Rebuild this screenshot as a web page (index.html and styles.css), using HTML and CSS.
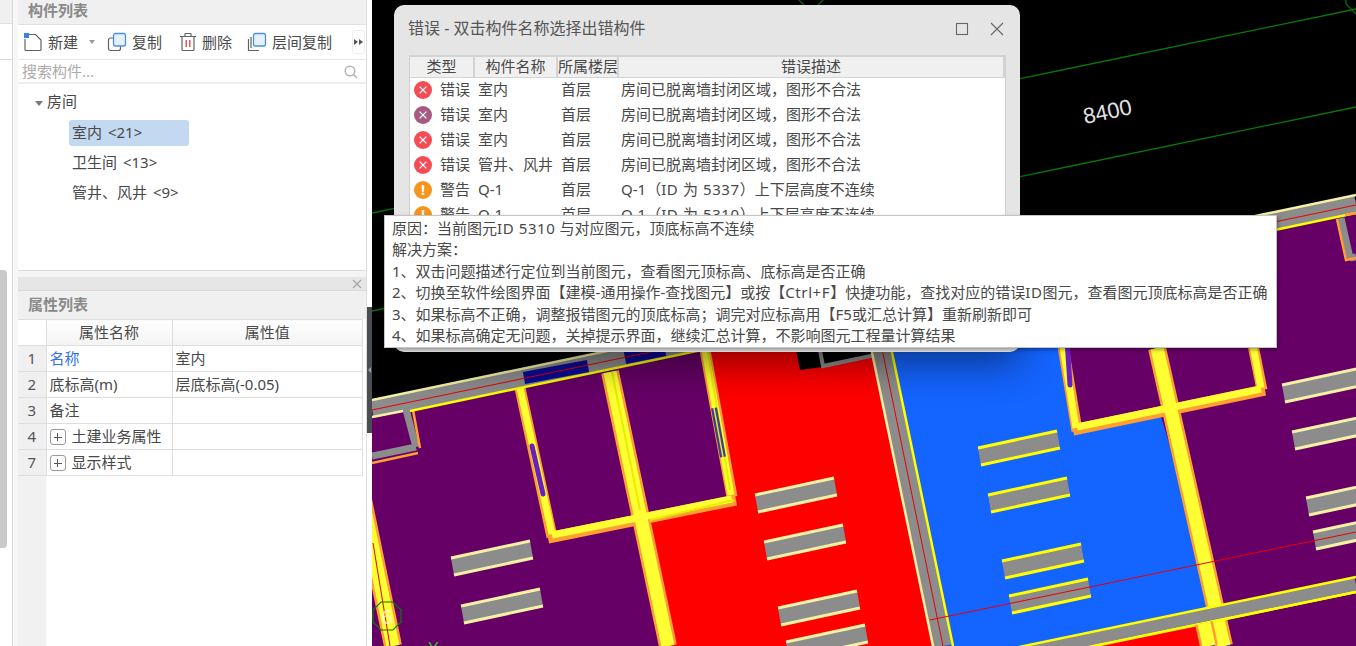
FILE: index.html
```html
<!DOCTYPE html>
<html lang="zh-CN">
<head>
<meta charset="utf-8">
<title>构件列表</title>
<link rel="stylesheet" href="styles.css">
</head>
<body>
<svg class="sprites" width="0" height="0" aria-hidden="true">
  <defs>
    <symbol id="i-err" viewBox="0 0 18 18"><path class="x-mark" d="M5.6 5.6 12.4 12.4M12.4 5.6 5.6 12.4"/></symbol>
    <g id="fx">
      <polygon class="fx-body" points="0,0 79,-17 82,0 3,17"/>
      <path class="fx-edge" d="M0 0 79 -17M3 17 82 0"/>
    </g>
  </defs>
</svg>

<aside class="rail">
  <div class="rail-top"></div>
  <div class="rail-mid"></div>
  <div class="rail-low"><div class="rail-thumb"></div></div>
</aside>

<section class="side">
  <div class="panel list-panel">
    <div class="panel-title">构件列表</div>
    <div class="toolbar">
      <span class="tool tool-new">
        <svg class="ic" width="20" height="20" viewBox="0 0 20 20"><path class="ic-line" d="M4 2.500H12.500L18 8V17.500Q18 18.500 17 18.500H3Q2 18.500 2 17.500V7"/><rect class="ic-blue" x="1" y="1" width="5" height="5"/></svg>
        <span>新建</span><i class="caret"></i>
      </span>
      <span class="tool tool-copy">
        <svg class="ic" width="20" height="20" viewBox="0 0 20 20"><rect class="ic-line" x="1.500" y="6" width="12" height="12.500" rx="2"/><rect class="ic-front" x="6.500" y="1.500" width="12" height="12.500" rx="2"/></svg>
        <span>复制</span>
      </span>
      <span class="tool tool-del">
        <svg class="ic" width="18" height="20" viewBox="0 0 18 20"><path class="ic-line" d="M1 4.500H17M6 4.500V2Q6 1.500 6.500 1.500H11.500Q12 1.500 12 2V4.500M3 4.500V17.500Q3 18.500 4 18.500H14Q15 18.500 15 17.500V4.500"/><path class="ic-red" d="M7.200 8V15M10.800 8V15"/></svg>
        <span>删除</span>
      </span>
      <span class="tool tool-floor">
        <svg class="ic" width="20" height="20" viewBox="0 0 20 20"><path class="ic-line" d="M1.500 7V18.500H12M4 5V16"/><rect class="ic-front" x="6.500" y="1.500" width="12" height="12.500" rx="2"/></svg>
        <span>层间复制</span>
      </span>
      <span class="more"><i class="tri"></i><i class="tri"></i></span>
    </div>
    <div class="search">
      <span>搜索构件...</span>
      <svg width="14" height="14" viewBox="0 0 14 14"><circle class="mag" cx="6" cy="6" r="4.800"/><path class="mag" d="M9.500 9.500 13 13"/></svg>
    </div>
    <div class="tree">
      <div class="tree-root"><i class="tree-caret"></i>房间</div>
      <div class="tree-item selected">室内 &lt;21&gt;</div>
      <div class="tree-item">卫生间 &lt;13&gt;</div>
      <div class="tree-item">管井、风井 &lt;9&gt;</div>
    </div>
  </div>

  <div class="panel prop-panel">
    <div class="prop-close"><svg width="10" height="10" viewBox="0 0 10 10"><path class="close-x" d="M1 1 9 9M9 1 1 9"/></svg></div>
    <div class="panel-title prop-title">属性列表</div>
    <div class="prop-body">
      <table class="prop">
        <colgroup><col class="c-n"><col class="c-k"><col class="c-v"></colgroup>
        <thead><tr><th></th><th>属性名称</th><th>属性值</th></tr></thead>
        <tbody>
          <tr><th>1</th><td class="link">名称</td><td>室内</td></tr>
          <tr><th>2</th><td>底标高(m)</td><td>层底标高(-0.05)</td></tr>
          <tr><th>3</th><td>备注</td><td></td></tr>
          <tr><th>4</th><td><span class="expand"></span>土建业务属性</td><td></td></tr>
          <tr><th>7</th><td><span class="expand"></span>显示样式</td><td></td></tr>
        </tbody>
      </table>
    </div>
  </div>
</section>

<div class="splitter"><div class="split-handle"><i></i></div></div>

<main class="canvas">
  <svg class="drawing" width="984" height="646" viewBox="372 0 984 646">
    <rect class="bg" x="372" y="0" width="984" height="646"/>
    <path class="green" d="M372 213 1356 9M372 311 1356 107"/>
    <polygon class="purple" points="372,405 1356,200 1356,646 372,646"/>
    <polygon class="red" points="703,345 880,309 945,646 668,646 645,523 736,500"/>
    <polygon class="blue" points="878,300 1060,270 1077,430 1160,413 1230,646 940,646"/>
    <polygon class="bg" points="795,345 885,345 885,354 830,366 800,370"/>
    <path class="grey-thin" d="M819 345 823 366 885 353"/>

    <path class="orange thin" d="M520 388 552 537M548 538 736 500M705 350 732 497M1062 340 1077 431M1073 430 1265 390M1252 340 1262 390"/>
    <path class="orange thick" d="M610 372 668 646M1157 348 1224 646M361 490 393 646"/>
    <path class="yellow thin-in" d="M520 388 552 534M552 535 732 499M705 350 731 495M1062 340 1076 428M1077 427 1261 389M1252 340 1261 388"/>
    <path class="yellow thick-in" d="M610 372 668 646M1157 348 1224 646M361 490 393 646"/>
    <path class="lime" d="M612 372 640 510M708 352 730 490M650 520 734 500"/>

    <path class="wall" d="M868 285 943 646"/>
    <path class="cream-l" d="M858 285 933 646"/>
    <path class="yellow-l" d="M878 285 953 646"/>

    <path class="grey-w" d="M404 402 416 447"/>
    <path class="grey-w" d="M372 456 416 447"/>
    <path class="orange-l" d="M413 410 420 448M372 463 418 453"/>

    <path class="wall" d="M372 409 1356 204"/>
    <path class="cream-l" d="M372 400 1356 195M372 417 403 411"/>
    <path class="yellow-l" d="M410 411 1356 213"/>

    <path class="window" d="M524 378 588 366M625 358 665 350"/>

    <path class="slot" d="M532 446 543 494M1067 340 1070 385"/>
    <path class="slot-dark" d="M714 408 723 457"/>
    <path class="slot-line" d="M714 408 723 457"/>

    <path class="grey-w" d="M1341 218 1350 258M1350 258 1356 257"/>
    <path class="orange-l" d="M1337 219 1346 260 1356 258M1345 215 1356 213"/>

    <g class="fx-cream">
      <use href="#fx" transform="translate(451 558)"/>
      <use href="#fx" transform="translate(461 606)"/>
      <use href="#fx" transform="translate(755 495)"/>
      <use href="#fx" transform="translate(764 542)"/>
      <use href="#fx" transform="translate(778 608)"/>
      <use href="#fx" transform="translate(786 642)"/>
      <use href="#fx" transform="translate(1282 385)"/>
      <use href="#fx" transform="translate(1292 432)"/>
      <use href="#fx" transform="translate(1306 498)"/>
      <use href="#fx" transform="translate(1313 532)"/>
    </g>
    <g class="fx-yellow">
      <use href="#fx" transform="translate(978 448)"/>
      <use href="#fx" transform="translate(988 495)"/>
      <use href="#fx" transform="translate(1002 561)"/>
      <use href="#fx" transform="translate(1009 596)"/>
    </g>

    <path class="wall-b" d="M1356 584.500 1000 658"/>
    <path class="yellow-l" d="M1356 577 1000 651M1356 592 1060 653"/>
    <polygon class="red" points="1095,646 1204,623.500 1211,646"/>
    <path class="yellow-l" d="M1356 592 1090 647"/>
    <path class="orange thick" d="M1204 623 1209 646"/>
    <path class="yellow thick-in" d="M1204 623 1209 646"/>

    <path class="redline" d="M372 410 1356 205M930 620 1356 532M373 543 390 646M873 305 943 646"/>

    <polygon class="octagon" points="381,602 393,602 401,610 401,622 393,630 381,630 373,622 373,610"/>
    <polygon class="octagon" points="805,-22 817,-22 825,-14 825,-2 817,6 805,6 797,-2 797,-14"/>
    <polygon class="octagon" points="1356,-20 1370,-20 1380,-10 1380,4 1370,14 1356,14 1346,4 1346,-10"/>
    <text class="axis-no" x="387" y="624">6</text>
    <text class="axis-y" x="428" y="654">Y</text>
    <text class="dim" x="1085" y="124" transform="rotate(-12 1085 124)">8400</text>
  </svg>

  <div class="dialog">
    <div class="dlg-head">
      <span class="dlg-title">错误 - 双击构件名称选择出错构件</span>
      <span class="dlg-btns">
        <svg width="14" height="14" viewBox="0 0 14 14"><rect class="win-ic" x="1.500" y="1.500" width="11" height="11"/></svg>
        <svg width="14" height="14" viewBox="0 0 14 14"><path class="win-ic" d="M1 1 13 13M13 1 1 13"/></svg>
      </span>
    </div>
    <div class="dlg-body">
      <table class="err">
        <colgroup><col class="e-t"><col class="e-n"><col class="e-f"><col></colgroup>
        <thead><tr><th>类型</th><th>构件名称</th><th>所属楼层</th><th>错误描述</th></tr></thead>
        <tbody>
          <tr><td><span class="type"><span class="dot dot-err"><svg width="18" height="18"><use href="#i-err"/></svg></span>错误</span></td><td>室内</td><td>首层</td><td class="desc">房间已脱离墙封闭区域，图形不合法</td></tr>
          <tr><td><span class="type"><span class="dot dot-err2"><svg width="18" height="18"><use href="#i-err"/></svg></span>错误</span></td><td>室内</td><td>首层</td><td class="desc">房间已脱离墙封闭区域，图形不合法</td></tr>
          <tr><td><span class="type"><span class="dot dot-err"><svg width="18" height="18"><use href="#i-err"/></svg></span>错误</span></td><td>室内</td><td>首层</td><td class="desc">房间已脱离墙封闭区域，图形不合法</td></tr>
          <tr><td><span class="type"><span class="dot dot-err"><svg width="18" height="18"><use href="#i-err"/></svg></span>错误</span></td><td>管井、风井</td><td>首层</td><td class="desc">房间已脱离墙封闭区域，图形不合法</td></tr>
          <tr><td><span class="type"><span class="dot dot-warn">!</span>警告</span></td><td>Q-1</td><td>首层</td><td class="desc">Q-1（<span class="wide">ID 为 5337</span>）上下层高度不连续</td></tr>
          <tr><td><span class="type"><span class="dot dot-warn">!</span>警告</span></td><td>Q-1</td><td>首层</td><td class="desc">Q-1（<span class="wide">ID 为 5310</span>）上下层高度不连续</td></tr>
        </tbody>
      </table>
    </div>
  </div>

  <div class="tooltip">
    <p>原因：当前图元<span class="wide">ID 5310</span> 与对应图元，顶底标高不连续</p>
    <p>解决方案：</p>
    <p>1、双击问题描述行定位到当前图元，查看图元顶标高、底标高是否正确</p>
    <p>2、切换至软件绘图界面【建模-通用操作-查找图元】或按【<span class="wide">Ctrl+F</span>】快捷功能，查找对应的错误<span class="wide">ID</span>图元，查看图元顶底标高是否正确</p>
    <p>3、如果标高不正确，调整报错图元的顶底标高；调完对应标高用【F5或汇总计算】重新刷新即可</p>
    <p>4、如果标高确定无问题，关掉提示界面，继续汇总计算，不影响图元工程量计算结果</p>
  </div>
</main>
</body>
</html>
```

FILE: styles.css
```css
* { box-sizing: border-box; }
html, body { margin: 0; height: 100%; }
body {
  width: 1356px;
  height: 646px;
  overflow: hidden;
  display: flex;
  background: #fff;
  color: #484848;
  font: 15px/1.3 "Noto Sans", "Noto Sans CJK SC", sans-serif;
}
.sprites { position: absolute; }
.wide { letter-spacing: .6px; }

/* left rail */
.rail {
  flex: 0 0 18px;
  display: flex;
  flex-direction: column;
  background: linear-gradient(90deg, #fff 0 12px, #d9d9d9 12px 13px, #f7f7f7 13px);
}
.rail-top { height: 24px; width: 12px; background: #f0f0f0; border-bottom: 1px solid #e2e2e2; }
.rail-mid { height: 36px; width: 12px; border-bottom: 1px solid #dcdcdc; }
.rail-low { flex: 1; padding-top: 210px; }
.rail-thumb { width: 7px; height: 278px; background: #c9c9c9; border-radius: 0 4px 4px 0; }

/* side column */
.side {
  flex: 0 0 349px;
  display: flex;
  flex-direction: column;
  gap: 6px;
  border-right: 1px solid #dedede;
  background: #f4f4f4;
}
.panel { background: #fff; display: flex; flex-direction: column; }
.list-panel { height: 271px; border-bottom: 1px solid #dcdcdc; }
.prop-panel { flex: 1; min-height: 0; }
.panel-title {
  height: 25px;
  flex: none;
  padding: 0 0 0 10px;
  background: #f0f0f0;
  border-bottom: 1px solid #e0e0e0;
  color: #8a8a8a;
  font-weight: 700;
  line-height: 21px;
}

.toolbar {
  height: 35px;
  flex: none;
  display: flex;
  align-items: center;
  padding-left: 5px;
  border-bottom: 1px solid #e6e6e6;
  position: relative;
}
.tool { display: flex; align-items: center; gap: 5px; white-space: nowrap; color: #4a4a4a; }
.tool > span { padding-top: 2px; }
.tool-new { width: 84px; }
.tool-copy { width: 72px; }
.tool-del { width: 68px; }
.tool-floor { width: 100px; }
.ic { flex: none; }
.ic-line { fill: none; stroke: #5f6368; stroke-width: 1.200; }
.ic-blue { fill: #3b82e6; }
.ic-front { fill: #e6f0fb; stroke: #4a90e2; stroke-width: 1.300; }
.ic-red { fill: none; stroke: #e23b3b; stroke-width: 1.300; }
.caret {
  width: 0; height: 0; margin-left: 6px;
  border: 3px solid transparent;
  border-top: 4px solid #9a9a9a;
  border-bottom: 0;
}
.more {
  display: flex; align-items: center; justify-content: center; gap: 1px;
  width: 13px; height: 24px; margin-left: 5px;
  border: 1px solid #eee; border-radius: 3px;
}
.tri { width: 0; height: 0; border: 3px solid transparent; border-left: 4px solid #555; border-right: 0; }

.search {
  height: 24px;
  flex: none;
  display: flex;
  align-items: center;
  justify-content: space-between;
  padding: 2px 8px 0 4px;
  color: #ababab;
  border-bottom: 2px solid #eeeeee;
}
.mag { fill: none; stroke: #b5b5b5; stroke-width: 1.500; }

.tree { flex: 1; padding-top: 6px; }
.tree-root { height: 26px; line-height: 22px; padding-left: 29px; position: relative; }
.tree-caret {
  position: absolute; left: 17px; top: 11px;
  width: 0; height: 0;
  border: 4px solid transparent;
  border-top: 5px solid #7a7a7a;
  border-bottom: 0;
}
.tree-item { height: 30px; line-height: 24px; padding: 0 0 0 54px; word-spacing: 2px; }
.tree-item.selected { height: 26px; line-height: 24px; padding: 0 0 0 3px; margin: 4px 0 4px 51px; width: 120px; background: #c2d9f1; border-radius: 3px; }

.prop-close {
  height: 14px;
  flex: none;
  background: #e6e6e6;
  display: flex;
  align-items: center;
  justify-content: flex-end;
  padding-right: 4px;
  border-bottom: 1px solid #dadada;
}
.close-x { fill: none; stroke: #a5a5a5; stroke-width: 1.200; }
.prop-title { height: 28px; line-height: 27px; border-bottom: 0; }
.prop-body { flex: 1; background: linear-gradient(90deg, #f1f1f1 0 28px, #fff 28px); }
.prop { width: 345px; table-layout: fixed; border-collapse: collapse; }
.c-n { width: 28px; }
.c-k { width: 126px; }
.prop th, .prop td { border: 1px solid #dedede; height: 26px; padding: 0 0 1px; font-weight: 400; line-height: 18px; white-space: nowrap; }
.prop thead th { text-align: center; background: linear-gradient(#fff, #f3f3f3); color: #4a4a4a; }
.prop tbody th { background: #f0f0f0; color: #555; text-align: center; }
.prop td { padding-left: 3px; background: #fff; }
.prop thead th:first-child { background: #fff; border-left: 0; }
.prop tbody th { border-left: 0; }
.link { color: #2f6ff0; }
.expand {
  display: inline-block; vertical-align: -3px;
  width: 16px; height: 16px; margin-right: 6px;
  border: 1px solid #9a9a9a; border-radius: 3px;
  background:
    linear-gradient(#555, #555) center / 8px 1px no-repeat,
    linear-gradient(#555, #555) center / 1px 8px no-repeat;
}

.splitter { flex: 0 0 5px; background: #fff; padding-top: 307px; }
.split-handle { width: 5px; height: 126px; background: #4a4d52; display: flex; align-items: center; justify-content: center; }
.split-handle i { width: 0; height: 0; border: 3px solid transparent; border-right: 3px solid #9ba0a6; border-left: 0; }

/* canvas */
.canvas { flex: 1; position: relative; overflow: hidden; background: #000; }
.drawing { display: block; }
.bg { fill: #000; }
.purple { fill: #660066; }
.red { fill: #ff0000; }
.blue { fill: #1464ff; }
.green { fill: none; stroke: #087a08; stroke-width: 1.300; }
.grey-thin { fill: none; stroke: #8c8c8c; stroke-width: 4; }
.orange, .yellow, .lime, .wall, .wall-b, .grey-w, .orange-l, .yellow-l, .cream-l, .window, .slot, .slot-dark, .slot-line, .redline { fill: none; }
.orange { stroke: #ff9f33; }
.yellow { stroke: #ffff33; }
.thin { stroke-width: 11; }
.thin-in { stroke-width: 7; }
.thick { stroke-width: 18; }
.thick-in { stroke-width: 13; }
.lime { stroke: #e4f000; stroke-width: 2; }
.wall { stroke: #8c8c8c; stroke-width: 18; }
.wall-b { stroke: #8c8c8c; stroke-width: 15; }
.grey-w { stroke: #8c8c8c; stroke-width: 7; }
.orange-l { stroke: #ff9f33; stroke-width: 2.500; }
.cream-l { stroke: #f6f2a4; stroke-width: 2.500; }
.yellow-l { stroke: #ffff00; stroke-width: 2.500; }
.window { stroke: #0a0a96; stroke-width: 12; }
.slot { stroke: #6a1fc0; stroke-width: 5; stroke-linecap: round; }
.slot-dark { stroke: #3b3b9a; stroke-width: 6; }
.slot-line { stroke: #e8e820; stroke-width: 1.500; }
.redline { stroke: #e80000; stroke-width: 1; }
.fx-body { fill: #8c8c8c; stroke: none; }
.fx-edge { fill: none; stroke-width: 3; }
.fx-cream { stroke: #f6f2a4; }
.fx-yellow { stroke: #ffff00; }
.octagon { fill: none; stroke: #0a7a0a; stroke-width: 1.200; }
.axis-no { fill: rgba(255,255,255,.75); font: 20px "Liberation Sans", sans-serif; text-anchor: middle; }
.axis-y { fill: #19d019; font: 16px "Liberation Sans", sans-serif; }
.dim { fill: #e2e2e2; font: 22px "Liberation Sans", sans-serif; }

/* dialog */
.dialog {
  position: absolute;
  left: 22px;
  top: 5px;
  width: 626px;
  height: 347px;
  display: flex;
  flex-direction: column;
  background: #e5e5e5;
  border-radius: 10px;
  box-shadow: 0 12px 38px rgba(0,0,0,.45);
}
.dlg-head {
  height: 50px;
  flex: none;
  display: flex;
  align-items: center;
  justify-content: space-between;
  padding: 0 16px 3px 14px;
}
.dlg-title { font-size: 16px; color: #555; }
.dlg-btns { display: flex; gap: 21px; align-items: center; }
.win-ic { fill: none; stroke: #666; stroke-width: 1.100; }
.dlg-body {
  margin: 0 14px 0 15px;
  height: 285px;
  background: #fff;
  border: 1px solid #cfcfcf;
  border-top: 0;
  overflow: hidden;
}
.err { width: 100%; table-layout: fixed; border-collapse: collapse; }
.e-t { width: 64px; }
.e-n { width: 83px; }
.e-f { width: 61px; }
.err th {
  height: 21px; padding: 0; font-weight: 400; white-space: nowrap;
  background: #f0f0f0; border: 2px solid #d4d4d4; border-width: 2px 2px 1px 0;
  line-height: 17px;
}
.err td { height: 25px; padding: 0 0 0 4px; white-space: nowrap; }
.err .desc { padding-left: 3px; }
.type { display: flex; align-items: center; gap: 8px; }
.dot {
  flex: none; width: 18px; height: 18px; border-radius: 50%;
  display: flex; align-items: center; justify-content: center;
  color: #fff; font-weight: 700; font-size: 14px; line-height: 18px;
}
.dot-err { background: #f44c55; }
.dot-err2 { background: #a85a80; }
.dot-warn { background: #f7941d; }
.x-mark { fill: none; stroke: #fff; stroke-width: 1.300; }

/* tooltip */
.tooltip {
  position: absolute;
  left: 12px;
  top: 215px;
  width: 893px;
  height: 133px;
  padding: 2px 0 0 7px;
  background: #fff;
  border: 1px solid #c4c4c4;
  box-shadow: 1px 2px 4px rgba(0,0,0,.35);
  white-space: nowrap;
}
.tooltip p { margin: 0; height: 21.400px; line-height: 21.400px; }
```
